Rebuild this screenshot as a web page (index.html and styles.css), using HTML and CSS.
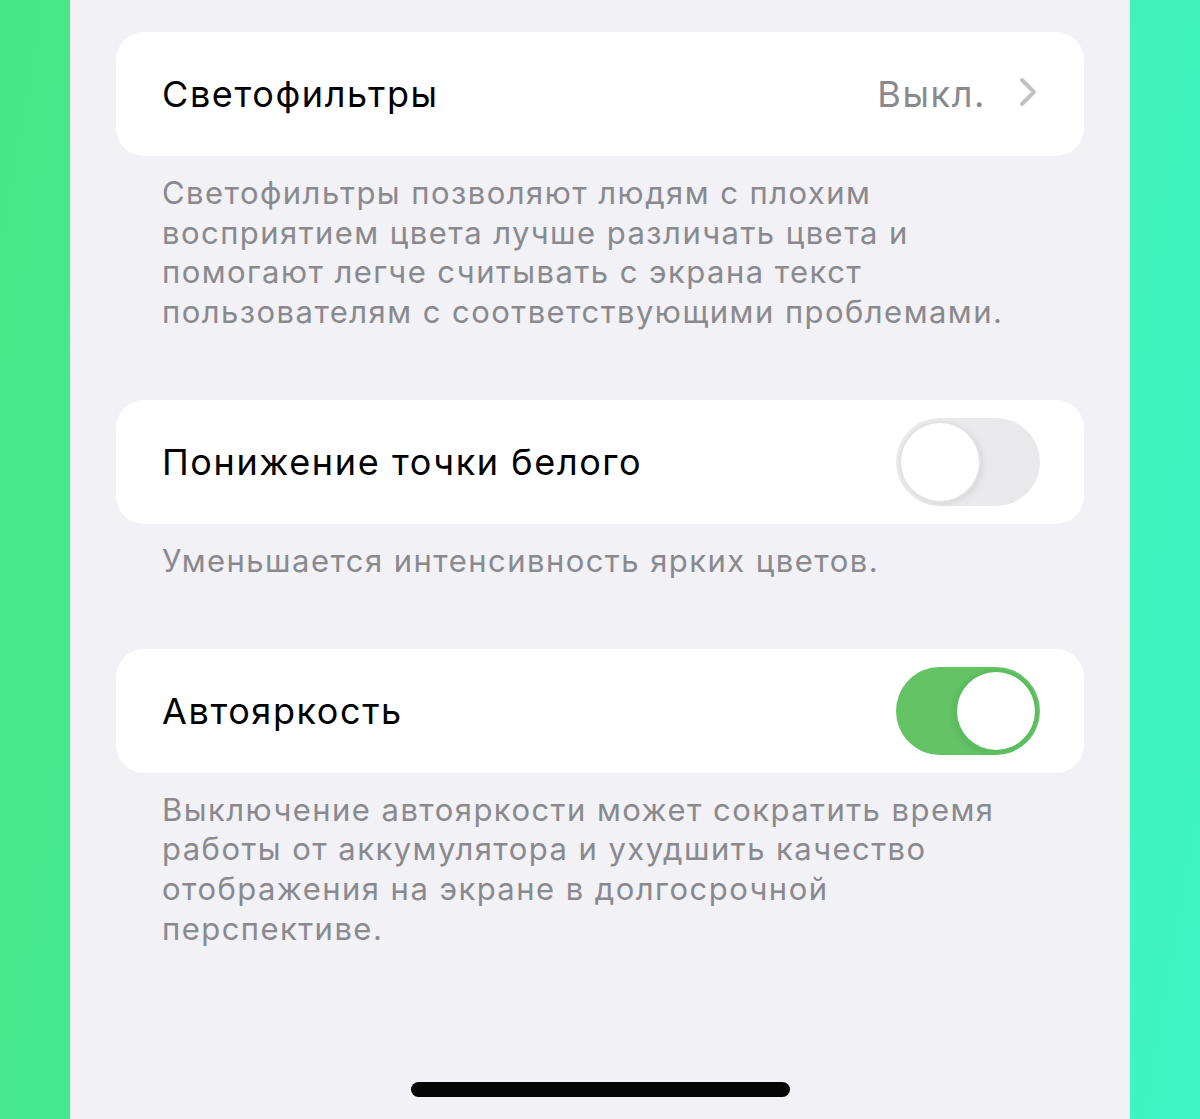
FILE: index.html
```html
<!DOCTYPE html>
<html lang="ru">
<head>
<meta charset="utf-8">
<title>Дисплей и размер текста</title>
<link rel="stylesheet" href="styles.css">
</head>
<body>
<div class="screen">
  <section class="group">
    <div class="cell">
      <span class="label">Светофильтры</span>
      <span class="accessory">
        <span class="value">Выкл.</span>
        <svg class="chevron" width="18" height="30" viewBox="0 0 18 30" aria-hidden="true">
          <polyline points="3,3 15,15 3,27" fill="none" stroke="#c2c2c6" stroke-width="4" stroke-linecap="round" stroke-linejoin="round"/>
        </svg>
      </span>
    </div>
    <p class="footer">Светофильтры позволяют людям с плохим восприятием цвета лучше различать цвета и помогают легче считывать с экрана текст пользователям с соответствующими проблемами.</p>
  </section>

  <section class="group">
    <div class="cell cell-toggle">
      <span class="label">Понижение точки белого</span>
      <span class="switch"><span class="knob"></span></span>
    </div>
    <p class="footer">Уменьшается интенсивность ярких цветов.</p>
  </section>

  <section class="group">
    <div class="cell cell-toggle">
      <span class="label">Автояркость</span>
      <span class="switch switch-on"><span class="knob"></span></span>
    </div>
    <p class="footer">Выключение автояркости может сократить время работы от аккумулятора и ухудшить качество отображения на экране в долгосрочной перспективе.</p>
  </section>

  <div class="home-bar"></div>
</div>
</body>
</html>
```

FILE: styles.css
```css
html, body {
  margin: 0;
  padding: 0;
}

body {
  width: 1200px;
  height: 1119px;
  overflow: hidden;
  background: linear-gradient(100deg, #46e785 0%, #44ee9e 45%, #3ff5c6 100%);
  font-family: Inter, "Liberation Sans", Arial, sans-serif;
}

.screen {
  box-sizing: border-box;
  width: 1060px;
  height: 1119px;
  margin: 0 auto;
  padding: 32px 46px 0;
  background: #f1f1f6;
  display: flex;
  flex-direction: column;
}

.group {
  display: flex;
  flex-direction: column;
}

.group + .group {
  margin-top: 68px;
}

.cell {
  height: 124px;
  box-sizing: border-box;
  padding: 0 47px 0 46px;
  background: #ffffff;
  border-radius: 28px;
  display: flex;
  align-items: center;
  justify-content: space-between;
}

.cell-toggle {
  padding-right: 44px;
}

.label {
  font-size: 36px;
  color: #000000;
  letter-spacing: 1.6px;
}

.accessory {
  display: flex;
  align-items: center;
  gap: 33px;
}

.value {
  font-size: 36px;
  color: #8a8a8e;
  letter-spacing: 1.6px;
}

.chevron {
  display: block;
  margin-top: -4px;
}

.footer {
  margin: 17px 0 0;
  padding: 0 46px;
  font-size: 31px;
  line-height: 39.7px;
  color: #8a8a8e;
  letter-spacing: 1.45px;
}

.switch {
  position: relative;
  width: 144px;
  height: 88px;
  border-radius: 44px;
  background: #e9e9eb;
  flex: none;
}

.knob {
  position: absolute;
  top: 5px;
  left: 5px;
  width: 78px;
  height: 78px;
  border-radius: 50%;
  background: #ffffff;
  box-shadow: 0 0 0 2px #e2e2e4, 3px 2px 6px rgba(0, 0, 0, 0.10);
}

.switch-on {
  background: #63c365;
}

.switch-on .knob {
  left: auto;
  right: 5px;
  box-shadow: 0 0 0 3px #5bbd5e, -3px 2px 6px rgba(0, 0, 0, 0.10);
}

.home-bar {
  margin: auto auto 22px;
  width: 379px;
  height: 15px;
  border-radius: 8px;
  background: #050505;
}
```
